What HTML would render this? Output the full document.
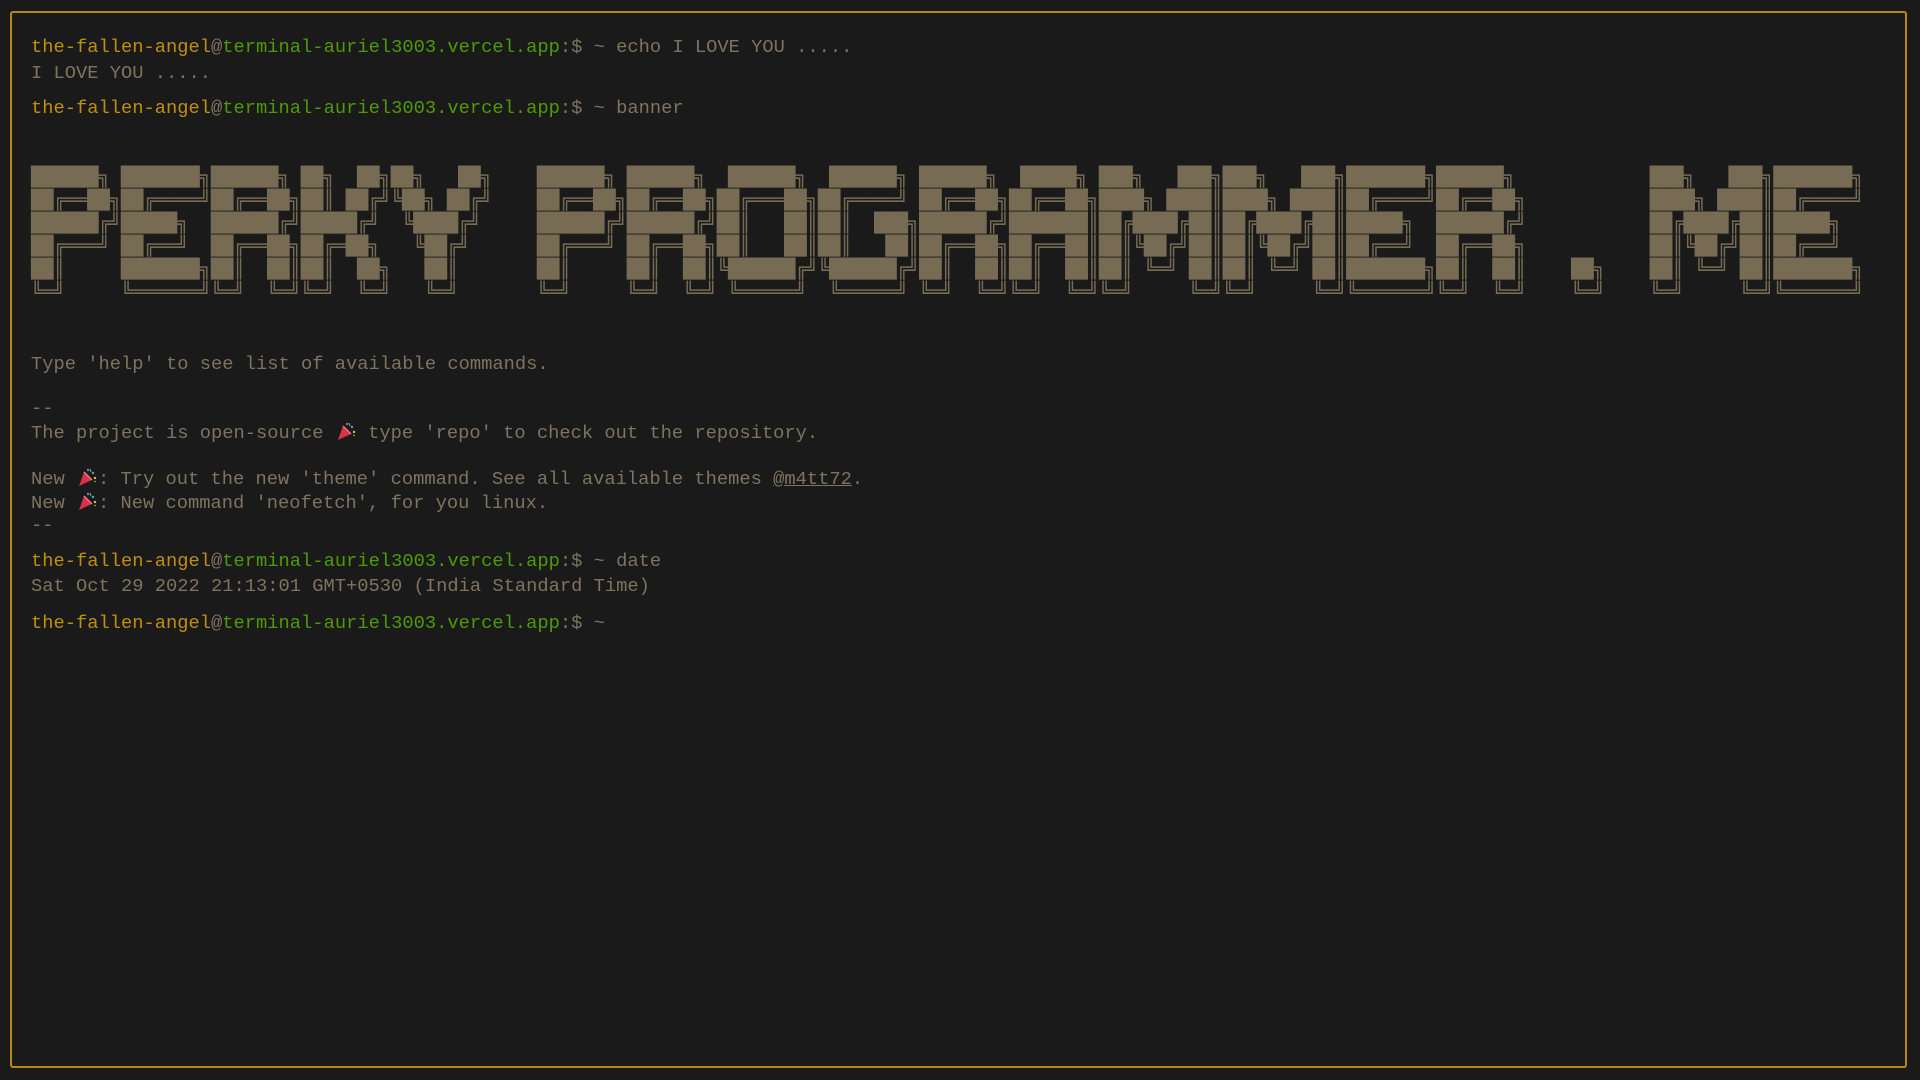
<!DOCTYPE html>
<html><head><meta charset="utf-8"><style>
html,body{margin:0;padding:0;background:#1a1a1a;width:1920px;height:1080px;overflow:hidden}
.frame{position:absolute;left:10px;top:11px;width:1897px;height:1057px;border:2px solid #b8870f;border-radius:3px;box-sizing:border-box}
.l{position:absolute;left:31px;height:24px;line-height:24px;font-family:"Liberation Mono","DejaVu Sans Mono",monospace;font-size:18.75px;color:#7f735f;white-space:pre}
.u{color:#bf8f10}.h{color:#4e9a06}.p{color:#7f735f}
.lnk{text-decoration:underline}
pre.b{position:absolute;left:31px;top:166px;margin:0;font-family:"DejaVu Sans Mono",monospace;font-size:18.68px;line-height:23px;color:#776b53}
.e{display:inline-block;width:22px;height:20px;vertical-align:-3px}
</style></head><body>
<div class="frame"></div>
<div class="l" style="top:35px"><span class="u">the-fallen-angel</span><span class="p">@</span><span class="h">terminal-auriel3003.vercel.app</span><span class="p">:$ ~ echo I LOVE YOU .....</span></div>
<div class="l" style="top:61px">I LOVE YOU .....</div>
<div class="l" style="top:96px"><span class="u">the-fallen-angel</span><span class="p">@</span><span class="h">terminal-auriel3003.vercel.app</span><span class="p">:$ ~ banner</span></div>
<pre class="b">██████╗ ███████╗██████╗ ██╗  ██╗██╗   ██╗    ██████╗ ██████╗  ██████╗  ██████╗ ██████╗  █████╗ ███╗   ███╗███╗   ███╗███████╗██████╗            ███╗   ███╗███████╗
██╔══██╗██╔════╝██╔══██╗██║ ██╔╝╚██╗ ██╔╝    ██╔══██╗██╔══██╗██╔═══██╗██╔════╝ ██╔══██╗██╔══██╗████╗ ████║████╗ ████║██╔════╝██╔══██╗           ████╗ ████║██╔════╝
██████╔╝█████╗  ██████╔╝█████╔╝  ╚████╔╝     ██████╔╝██████╔╝██║   ██║██║  ███╗██████╔╝███████║██╔████╔██║██╔████╔██║█████╗  ██████╔╝           ██╔████╔██║█████╗  
██╔═══╝ ██╔══╝  ██╔══██╗██╔═██╗   ╚██╔╝      ██╔═══╝ ██╔══██╗██║   ██║██║   ██║██╔══██╗██╔══██║██║╚██╔╝██║██║╚██╔╝██║██╔══╝  ██╔══██╗           ██║╚██╔╝██║██╔══╝  
██║     ███████╗██║  ██║██║  ██╗   ██║       ██║     ██║  ██║╚██████╔╝╚██████╔╝██║  ██║██║  ██║██║ ╚═╝ ██║██║ ╚═╝ ██║███████╗██║  ██║    ██╗    ██║ ╚═╝ ██║███████╗
╚═╝     ╚══════╝╚═╝  ╚═╝╚═╝  ╚═╝   ╚═╝       ╚═╝     ╚═╝  ╚═╝ ╚═════╝  ╚═════╝ ╚═╝  ╚═╝╚═╝  ╚═╝╚═╝     ╚═╝╚═╝     ╚═╝╚══════╝╚═╝  ╚═╝    ╚═╝    ╚═╝     ╚═╝╚══════╝</pre>
<div class="l" style="top:352px">Type 'help' to see list of available commands.</div>
<div class="l" style="top:396px">--</div>
<div class="l" style="top:421px">The project is open-source <svg class="e" viewBox="0 0 22 20"><path d="M3 19 L8 5 L16 13 Z" fill="#d8324a"/><path d="M8 5 L16 13" stroke="#f07080" stroke-width="1.5"/><circle cx="12" cy="3" r="1.2" fill="#8a6ad8"/><circle cx="17" cy="6" r="1.2" fill="#4aa0e0"/><circle cx="19" cy="11" r="1.2" fill="#e0c040"/><path d="M14 2 l1 3 M18 14 l2 1" stroke="#60b040" stroke-width="1.2"/></svg> type 'repo' to check out the repository.</div>
<div class="l" style="top:467px">New <svg class="e" viewBox="0 0 22 20"><path d="M3 19 L8 5 L16 13 Z" fill="#d8324a"/><path d="M8 5 L16 13" stroke="#f07080" stroke-width="1.5"/><circle cx="12" cy="3" r="1.2" fill="#8a6ad8"/><circle cx="17" cy="6" r="1.2" fill="#4aa0e0"/><circle cx="19" cy="11" r="1.2" fill="#e0c040"/><path d="M14 2 l1 3 M18 14 l2 1" stroke="#60b040" stroke-width="1.2"/></svg>: Try out the new 'theme' command. See all available themes <span class="lnk">@m4tt72</span>.</div>
<div class="l" style="top:491px">New <svg class="e" viewBox="0 0 22 20"><path d="M3 19 L8 5 L16 13 Z" fill="#d8324a"/><path d="M8 5 L16 13" stroke="#f07080" stroke-width="1.5"/><circle cx="12" cy="3" r="1.2" fill="#8a6ad8"/><circle cx="17" cy="6" r="1.2" fill="#4aa0e0"/><circle cx="19" cy="11" r="1.2" fill="#e0c040"/><path d="M14 2 l1 3 M18 14 l2 1" stroke="#60b040" stroke-width="1.2"/></svg>: New command 'neofetch', for you linux.</div>
<div class="l" style="top:513px">--</div>
<div class="l" style="top:549px"><span class="u">the-fallen-angel</span><span class="p">@</span><span class="h">terminal-auriel3003.vercel.app</span><span class="p">:$ ~ date</span></div>
<div class="l" style="top:574px">Sat Oct 29 2022 21:13:01 GMT+0530 (India Standard Time)</div>
<div class="l" style="top:611px"><span class="u">the-fallen-angel</span><span class="p">@</span><span class="h">terminal-auriel3003.vercel.app</span><span class="p">:$ ~</span></div>
</body></html>
